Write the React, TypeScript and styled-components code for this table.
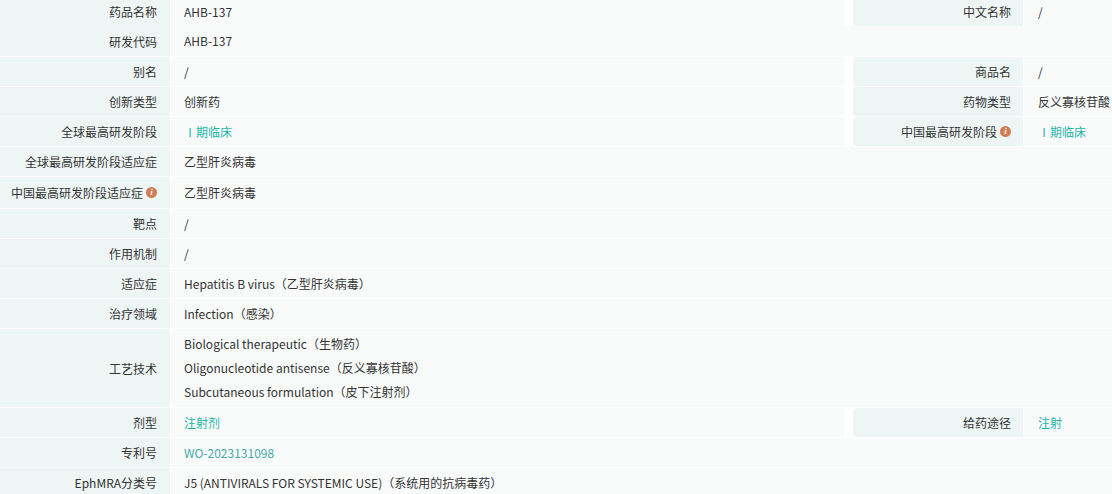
import React from 'react';
import styled, { createGlobalStyle } from 'styled-components';

const GlobalStyle = createGlobalStyle`
  body {
    margin: 0;
    background: #fff;
    font-family: "Noto Sans CJK SC", "Noto Sans", sans-serif;
    font-size: 12px;
    color: #333;
  }
`;

type Val = string | { text: string; link?: boolean; patent?: boolean };

type Side = {
  label: string;
  info?: boolean;
  value: Val | Val[];
};

type IRow = {
  left: Side;
  right?: Side;
  joined?: boolean;
};

const rows: IRow[] = [
  { left: { label: '药品名称', value: 'AHB-137' }, right: { label: '中文名称', value: '/' } },
  { left: { label: '研发代码', value: 'AHB-137' }, joined: true },
  { left: { label: '别名', value: '/' }, right: { label: '商品名', value: '/' } },
  { left: { label: '创新类型', value: '创新药' }, right: { label: '药物类型', value: '反义寡核苷酸' } },
  {
    left: { label: '全球最高研发阶段', value: { text: 'Ⅰ期临床', link: true } },
    right: { label: '中国最高研发阶段', info: true, value: { text: 'Ⅰ期临床', link: true } },
  },
  { left: { label: '全球最高研发阶段适应症', value: '乙型肝炎病毒' } },
  { left: { label: '中国最高研发阶段适应症', info: true, value: '乙型肝炎病毒' } },
  { left: { label: '靶点', value: '/' } },
  { left: { label: '作用机制', value: '/' } },
  { left: { label: '适应症', value: 'Hepatitis B virus（乙型肝炎病毒）' } },
  { left: { label: '治疗领域', value: 'Infection（感染）' } },
  {
    left: {
      label: '工艺技术',
      value: [
        'Biological therapeutic（生物药）',
        'Oligonucleotide antisense（反义寡核苷酸）',
        'Subcutaneous formulation（皮下注射剂）',
      ],
    },
  },
  {
    left: { label: '剂型', value: { text: '注射剂', link: true } },
    right: { label: '给药途径', value: { text: '注射', link: true } },
  },
  { left: { label: '专利号', value: { text: 'WO-2023131098', patent: true } } },
  { left: { label: 'EphMRA分类号', value: 'J5 (ANTIVIRALS FOR SYSTEMIC USE)（系统用的抗病毒药）' } },
];

const renderVal = (v: Val, i?: number) => {
  if (typeof v === 'string') return <Text key={i}>{v}</Text>;
  if (v.link || v.patent) return <LinkText key={i} $patent={v.patent}>{v.text}</LinkText>;
  return <Text key={i}>{v.text}</Text>;
};

const Row = ({ row }: { row: IRow }) => (
  <RowWrap $joined={row.joined} $tall={row.left.info}>
    <Label>
      {row.left.label}
      {row.left.info && <InfoDot>i</InfoDot>}
    </Label>
    <Value $pair={!!row.right}>
      {Array.isArray(row.left.value) ? (
        <Lines>{row.left.value.map((v, i) => renderVal(v, i))}</Lines>
      ) : (
        renderVal(row.left.value)
      )}
    </Value>
    {row.right && (
      <>
        <RightLabel>
          {row.right.label}
          {row.right.info && <InfoDot>i</InfoDot>}
        </RightLabel>
        <RightValue>{renderVal(row.right.value as Val)}</RightValue>
      </>
    )}
  </RowWrap>
);

export default function App() {
  return (
    <>
      <GlobalStyle />
      <Table>
        {rows.map((r, i) => (
          <Row key={i} row={r} />
        ))}
      </Table>
    </>
  );
}

// page is scrolled a few pixels down in the screenshot
const Table = styled.div`
  width: 1112px;
  margin-top: -3px;
  display: flex;
  flex-direction: column;
  overflow: hidden;
`;

const RowWrap = styled.div<{ $joined?: boolean; $tall?: boolean }>`
  display: flex;
  gap: 1px;
  margin-top: ${(p) => (p.$joined ? '0' : '1px')};
  min-height: ${(p) => (p.$joined ? '30px' : p.$tall ? '31px' : '29px')};

  &:first-child {
    margin-top: 0;
  }
`;

const Label = styled.div`
  width: 170px;
  flex: none;
  box-sizing: border-box;
  padding-right: 13px;
  display: flex;
  align-items: center;
  justify-content: flex-end;
  background: #eef5f5;
  color: #333;
  white-space: nowrap;
`;

const RightLabel = styled(Label)`
  margin-left: 8px;
  padding-right: 12px;
  border-radius: 4px 0 0 4px;
`;

const Value = styled.div<{ $pair?: boolean }>`
  flex: ${(p) => (p.$pair ? 'none' : '1')};
  width: ${(p) => (p.$pair ? '673px' : 'auto')};
  box-sizing: border-box;
  padding: 0 13px;
  display: flex;
  align-items: center;
  background: #f9fbfb;
  white-space: nowrap;
  overflow: hidden;
`;

const RightValue = styled(Value)`
  flex: 1;
  padding-left: 14px;
  padding-right: 0;
`;

const Lines = styled.div`
  display: flex;
  flex-direction: column;
  padding: 3px 0;
`;

const Text = styled.span`
  line-height: 24px;
  color: #333;
`;

const LinkText = styled.span<{ $patent?: boolean }>`
  line-height: 24px;
  color: ${(p) => (p.$patent ? '#45a9a6' : '#1eb5a8')};
`;

const InfoDot = styled.span`
  width: 11px;
  height: 11px;
  margin-left: 3px;
  border-radius: 50%;
  background: #d27d57;
  color: #fff;
  font-family: "Liberation Serif", serif;
  font-style: italic;
  font-weight: 700;
  font-size: 9px;
  line-height: 11px;
  text-align: center;
  flex: none;
`;
